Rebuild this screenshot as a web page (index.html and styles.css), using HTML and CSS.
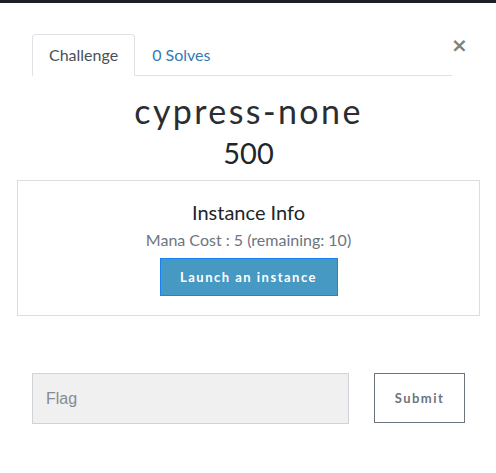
FILE: index.html
```html
<!DOCTYPE html>
<html>
<head>
<meta charset="utf-8">
<link rel="stylesheet" href="styles.css">
</head>
<body>
<div class="topbar"></div>
<div class="modal">
  <div class="tabrow">
    <ul class="tabs">
      <li class="tab active">Challenge</li>
      <li class="tab link">0 Solves</li>
    </ul>
    <button class="close" aria-label="Close">&times;</button>
  </div>
  <h2 class="title">cypress-none</h2>
  <h3 class="value">500</h3>
  <div class="instance">
    <h4 class="inst-title">Instance Info</h4>
    <p class="mana">Mana Cost : 5 (remaining: 10)</p>
    <button class="launch">Launch an instance</button>
  </div>
  <div class="flagrow">
    <input class="flag" type="text" placeholder="Flag">
    <button class="submit">Submit</button>
  </div>
</div>
</body>
</html>
```

FILE: styles.css
```css
html, body {
  margin: 0;
  padding: 0;
  background: #fff;
  font-family: "Lato", "Liberation Sans", sans-serif;
}
.topbar {
  height: 3px;
  background: #1c1f23;
}
.modal {
  padding: 31px 16px 0 17px;
  width: 463px;
}
.tabrow {
  display: flex;
  align-items: flex-start;
  margin: 0 15px;
}
.tabs {
  list-style: none;
  margin: 0;
  padding: 0;
  display: flex;
  width: 420px;
  border-bottom: 1px solid #dee2e6;
}
.tab {
  box-sizing: border-box;
  padding: 0 16px;
  line-height: 40px;
  font-size: 16px;
  border: 1px solid transparent;
  border-top-left-radius: 4px;
  border-top-right-radius: 4px;
  margin-bottom: -1px;
  height: 42px;
}
.tab.active {
  color: #495057;
  border-color: #dee2e6 #dee2e6 #fff;
}
.tab.link {
  color: #337ab7;
}
.close {
  background: none;
  border: 0;
  padding: 0;
  width: 12px;
  font-family: "DejaVu Sans", sans-serif;
  font-size: 20px;
  font-weight: bold;
  line-height: 22px;
  color: #808080;
  margin: 0 0 0 -1px;
}
.title {
  margin: 15px 0 0;
  text-align: center;
  font-weight: 400;
  font-size: 34px;
  line-height: 40px;
  letter-spacing: 2.4px;
  color: #2a2e32;
}
.value {
  margin: 4px 0 0;
  text-align: center;
  font-weight: 400;
  font-size: 29px;
  line-height: 36px;
  color: #212529;
}
.instance {
  margin-top: 9px;
  border: 1px solid #dddddd;
  height: 136px;
  box-sizing: border-box;
  display: flex;
  flex-direction: column;
  align-items: center;
  padding-top: 18px;
}
.inst-title {
  margin: 0;
  font-weight: 400;
  font-size: 20px;
  line-height: 26px;
  color: #212529;
}
.mana {
  margin: 4px 0 0;
  font-size: 16px;
  line-height: 22px;
  color: #6c757d;
}
.launch {
  margin-top: 7px;
  width: 178px;
  height: 38px;
  background: #4699c2;
  border: 1px solid #1a82f0;
  color: #fff;
  font-family: "Lato", sans-serif;
  font-weight: bold;
  font-size: 13px;
  letter-spacing: 1.5px;
  padding: 0;
}
.flagrow {
  display: flex;
  align-items: flex-start;
  margin: 57px 15px 0;
  gap: 25px;
}
.flag {
  width: 317px;
  height: 51px;
  box-sizing: border-box;
  background: #f0f0f0;
  border: 1px solid #ced4da;
  padding: 0 13px;
  margin: 0;
  font-family: "Liberation Sans", sans-serif;
  font-size: 16px;
  color: #495057;
}
.flag::placeholder {
  color: #858b91;
}
.submit {
  width: 91px;
  height: 50px;
  box-sizing: border-box;
  background: #fff;
  border: 1px solid #6c757d;
  color: #6c757d;
  font-family: "Lato", sans-serif;
  font-weight: bold;
  font-size: 13px;
  letter-spacing: 1.5px;
  padding: 0;
}
```
